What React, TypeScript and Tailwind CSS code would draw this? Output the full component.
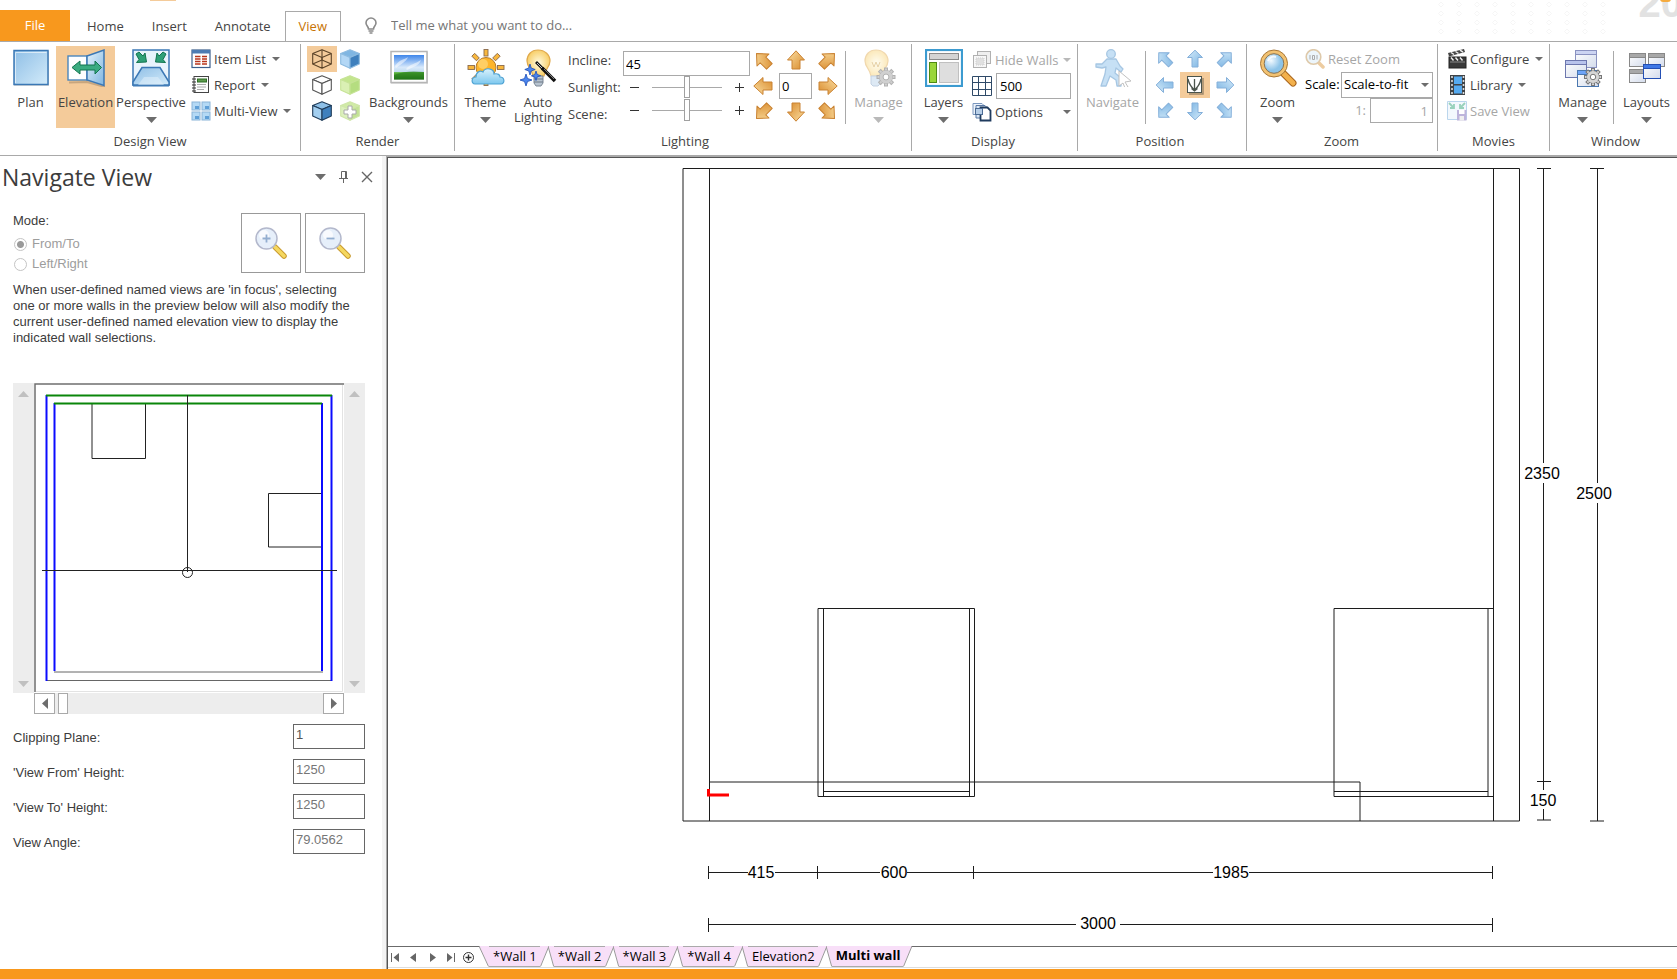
import type { ReactNode } from "react";
import clsx from "clsx";

function Defs() {
  return (
    <svg className="absolute h-0 w-0" aria-hidden="true">
      <defs>
        <linearGradient id="sky" x1="0" y1="0" x2="1" y2="1">
          <stop offset="0" stopColor="#e4f2fb" />
          <stop offset="1" stopColor="#7fb5e0" />
        </linearGradient>
        <linearGradient id="plan" x1="0" y1="0" x2="1" y2="1">
          <stop offset="0" stopColor="#8fbfe6" />
          <stop offset="1" stopColor="#d3ebfa" />
        </linearGradient>
        <linearGradient id="gold" x1="0" y1="0" x2="1" y2="1">
          <stop offset="0" stopColor="#fbe0a4" />
          <stop offset="1" stopColor="#d98a2b" />
        </linearGradient>
        <linearGradient id="blueArrow" x1="0" y1="0" x2="1" y2="1">
          <stop offset="0" stopColor="#d6ecfa" />
          <stop offset="1" stopColor="#78b2e2" />
        </linearGradient>
        <linearGradient id="photo" x1="0" y1="0" x2="0" y2="1">
          <stop offset="0" stopColor="#3f86ea" />
          <stop offset="0.5" stopColor="#d8e9fb" />
          <stop offset="0.68" stopColor="#c3dcf0" />
          <stop offset="0.72" stopColor="#5bb53c" />
          <stop offset="1" stopColor="#1d6a16" />
        </linearGradient>
        <radialGradient id="bulb">
          <stop offset="0" stopColor="#fffbe0" />
          <stop offset="1" stopColor="#f8cf6a" />
        </radialGradient>
        <radialGradient id="lens" cx="0.35" cy="0.35">
          <stop offset="0" stopColor="#f3faff" />
          <stop offset="1" stopColor="#8cc3e8" />
        </radialGradient>
        <linearGradient id="cloud" x1="0" y1="0" x2="0" y2="1">
          <stop offset="0" stopColor="#d9f2fc" />
          <stop offset="1" stopColor="#7cc7ee" />
        </linearGradient>
        <linearGradient id="win" x1="0" y1="0" x2="1" y2="1">
          <stop offset="0" stopColor="#ffffff" />
          <stop offset="1" stopColor="#d4dcec" />
        </linearGradient>
      </defs>
    </svg>
  );
}

function Caret({ big, muted }: { big?: boolean; muted?: boolean }) {
  const fill = muted ? "#b9b9b9" : "#6d6d6d";
  return big ? (
    <svg width="11" height="6" viewBox="0 0 11 6" className="shrink-0">
      <path d="M0 0h11L5.5 6z" fill={fill} />
    </svg>
  ) : (
    <svg width="8" height="4" viewBox="0 0 8 4" className="shrink-0">
      <path d="M0 0h8L4 4z" fill={fill} />
    </svg>
  );
}

/* ---------- large icons, 38 x 38 ---------- */

function Big({ children, faded }: { children: ReactNode; faded?: boolean }) {
  return (
    <svg width="38" height="38" viewBox="0 0 38 38" className={clsx("shrink-0", faded && "opacity-45")}>
      {children}
    </svg>
  );
}

const PlanIcon = () => (
  <Big>
    <rect x="2" y="2" width="35" height="35" fill="#000" opacity="0.15" />
    <rect x="2" y="1.5" width="34" height="34" fill="url(#plan)" stroke="#3b78b5" strokeWidth="1.5" />
    <path d="M3.5 34V3.5h31" fill="none" stroke="#fff" opacity="0.6" />
  </Big>
);

const ElevationIcon = () => (
  <Big>
    <path d="M2 33.5l18-.5 18 5" fill="none" stroke="#000" opacity="0.18" strokeWidth="2" />
    <rect x="1" y="7" width="19" height="24" fill="#fdfeff" stroke="#4a86bd" strokeWidth="1.4" />
    <path d="M20 7L37 1v35.5L20 31z" fill="url(#sky)" stroke="#3b78b5" strokeWidth="1.5" />
    <path d="M5 18.5l8-6.5v4h15v-4l6.5 6.5L28 25v-4H13v4z" fill="#3aab80" stroke="#12744f" />
  </Big>
);

const PerspectiveIcon = () => (
  <Big>
    <rect x="1" y="1" width="36" height="35" fill="#e8f3fc" stroke="#3b78b5" strokeWidth="1.5" />
    <path d="M1 36V33l9-14.5h18L37 33v3z" fill="url(#plan)" stroke="#3b78b5" strokeWidth="1.5" />
    <path d="M6 36l6-8h14l6 8" fill="#e4f2fb" opacity="0.5" />
    <path d="M1 37h36" stroke="#3b78b5" />
    <path d="M4 5l3-2 4 4 2-3 1.5 9-10 .5 2.5-3z" fill="#2fa077" stroke="#12744f" />
    <path d="M34 5l-3-2-4 4-2-3-1.5 9 10 .5-2.5-3z" fill="#2fa077" stroke="#12744f" />
  </Big>
);

const BackgroundsIcon = () => (
  <Big>
    <rect x="1" y="3" width="37" height="32" fill="#000" opacity="0.12" />
    <rect x="1" y="2.5" width="36" height="31" fill="#fff" stroke="#b5b5b5" strokeWidth="1.5" />
    <rect x="4" y="6" width="30" height="24.5" fill="url(#photo)" />
    <path d="M5 17c5-7 9-6 13-9-2 5-6 6-12 11z" fill="#fff" opacity="0.55" />
    <path d="M16 20c4-5 9-5 15-9-2 6-8 7-14 10z" fill="#fff" opacity="0.5" />
    <path d="M4 26c9-4 20-4 30-3v7.5H4z" fill="#23791b" opacity="0.6" />
  </Big>
);

const ThemeIcon = () => (
  <Big>
    <g fill="#f8b73d" stroke="#8a6a4c" strokeWidth="0.9">
      {[0, 45, 90, 135, 180, 225, 270, 315].map((a) => (
        <rect key={a} x="17" y="0.5" width="4" height="6.5" transform={`rotate(${a} 19 18.5)`} />
      ))}
    </g>
    <circle cx="19" cy="18.5" r="10" fill="#fdb52c" stroke="#b57a28" />
    <circle cx="16" cy="15" r="5" fill="#ffe08a" opacity="0.6" />
    <path
      d="M8 35c-4 0-4-7 1-7 0-5 4-7 7-5 2-5 11-4 11 2 4-1 6 1 6 3 5 0 5 7 1 7z"
      fill="url(#cloud)"
      stroke="#4fa3d4"
      strokeWidth="1.2"
    />
  </Big>
);

const AutoLightingIcon = () => (
  <Big>
    <path
      d="M19 1c7 0 12 5 12 11 0 6-5 8-6 15H14c-1-7-6-9-6-15C8 6 12 1 19 1z"
      fill="url(#bulb)"
      stroke="#e0a94c"
      strokeWidth="1.2"
    />
    <path d="M15 27h9v7l-2 3h-5l-2-3z" fill="#b8c4d0" stroke="#7c8896" />
    <path d="M15 30h9M15 33h9" stroke="#6c7886" />
    <path d="M17 13l7 7" stroke="#111" strokeWidth="2.8" />
    <path d="M18 14l5 5" stroke="#ddd" strokeWidth="0.9" />
    <path d="M23 19l13 13" stroke="#111" strokeWidth="3.6" />
    <path d="M25 20l10 10" stroke="#8a8a8a" strokeWidth="0.9" />
    <g fill="#4b86ee" stroke="#1e4fb8" strokeWidth="0.8">
      <path d="M11 15l1.2 4 4 1.5-4 1.5L11 26l-1.2-4-4-1.5 4-1.5z" />
      <path d="M17 22l1.2 3.5 3.5 1.2-3.500 1.2L17 31.5l-1.2-3.5-3.5-1.2 3.5-1.2z" />
      <path d="M7 25l1.5 4.5L13 31l-4.5 1.5L7 37l-1.5-4.5L1 31l4.5-1.5z" />
    </g>
  </Big>
);

function Gear({ cx, cy, r, fill, stroke }: { cx: number; cy: number; r: number; fill: string; stroke: string }) {
  return (
    <g fill={fill} stroke={stroke} strokeWidth="1">
      {[0, 45, 90, 135, 180, 225, 270, 315].map((a) => (
        <rect key={a} x={cx - 1.5} y={cy - r - 2.5} width="3" height="5" transform={`rotate(${a} ${cx} ${cy})`} />
      ))}
      <circle cx={cx} cy={cy} r={r} />
      <circle cx={cx} cy={cy} r={r} stroke="none" />
      <circle cx={cx} cy={cy} r={r / 2.2} fill="#fff" />
    </g>
  );
}

const BulbManageIcon = () => (
  <Big faded>
    <path
      d="M16 1c7 0 12 5 12 11 0 6-5 8-6 15H11c-1-7-6-9-6-15C5 6 9 1 16 1z"
      fill="url(#bulb)"
      stroke="#e0a94c"
      strokeWidth="1.2"
    />
    <path d="M12 13l2 5 2-5 2 5 2-5" fill="none" stroke="#c99a3c" />
    <path d="M11 27h9v8l-2 2h-5l-2-2z" fill="#b5cfe8" stroke="#7c9cc0" />
    <Gear cx={26} cy={28} r={6.5} fill="#999" stroke="#555" />
  </Big>
);

const LayersIcon = () => (
  <Big>
    <rect x="1" y="1" width="36" height="36" fill="#fff" stroke="#3c9bd0" strokeWidth="2.2" />
    <rect x="4.5" y="4.5" width="29" height="6" fill="#d4d4d4" stroke="#8b8b8b" />
    <rect x="4.5" y="13.5" width="7" height="20" fill="#9ad63a" stroke="#4f8a12" />
    <rect x="14.5" y="13.5" width="19" height="20" fill="#dedede" stroke="#c0c0c0" />
  </Big>
);

const NavigateIcon = () => (
  <Big faded>
    <g fill="#83bce9" stroke="#3b83c2" strokeWidth="1.3" strokeLinejoin="round">
      <circle cx="17" cy="5" r="4.3" />
      <path d="M13 10h9l4 7 3 3-2 3-5-4-1 5 6 5v8h-4l-1-6-6-4-4 10H7l4-12 1-7-4 1-6-1v-3h6z" />
    </g>
    <path d="M25 22l12 10-6 1 3 5-3 1-2-5-4 3z" fill="#fff" stroke="#777" />
  </Big>
);

const ZoomIcon = () => (
  <Big>
    <path d="M23 23l11 11" stroke="#a8641c" strokeWidth="7" strokeLinecap="round" />
    <path d="M24 24l10 10" stroke="#f3b14c" strokeWidth="5" strokeLinecap="round" />
    <circle cx="15" cy="14.5" r="13.5" fill="#f2c272" stroke="#a97836" />
    <circle cx="15" cy="14.5" r="9.8" fill="url(#lens)" stroke="#8a7350" />
    <path d="M9 12c1-4 5-5 8-4" fill="none" stroke="#fff" strokeWidth="2" opacity="0.8" />
  </Big>
);

function Win({ x, y, w, h, bar, edge }: { x: number; y: number; w: number; h: number; bar: string; edge: string }) {
  return (
    <g>
      <rect x={x} y={y} width={w} height={h} fill="url(#win)" stroke={edge} />
      <rect x={x} y={y} width={w} height="4" fill={bar} stroke={edge} />
    </g>
  );
}

const WindowManageIcon = () => (
  <Big>
    <Win x={11.5} y={1.5} w={21} h={17} bar="#ccd4f2" edge="#8a92c0" />
    <Win x={1.5} y={11.5} w={21} h={17} bar="#b8c3ec" edge="#6d77ae" />
    <Win x={13.5} y={21.5} w={21} h={16} bar="#6ea4f8" edge="#4a78b0" />
    <Gear cx={29} cy={28} r={6} fill="#d6d6d6" stroke="#777" />
  </Big>
);

const LayoutsIcon = () => (
  <Big>
    <Win x={1.5} y={4.5} w={16} h={13} bar="#a8a8a8" edge="#888" />
    <Win x={20.5} y={4.5} w={16} h={13} bar="#a8a8a8" edge="#888" />
    <Win x={1.5} y={20.5} w={16} h={13} bar="#a8a8a8" edge="#888" />
    <Win x={15.5} y={15.5} w={17} h={14} bar="#3f78e6" edge="#2450b4" />
  </Big>
);

/* ---------- small icons, 20 x 20 ---------- */

function Small({ children, faded }: { children: ReactNode; faded?: boolean }) {
  return (
    <svg width="20" height="20" viewBox="0 0 20 20" className={clsx("shrink-0", faded && "opacity-45")}>
      {children}
    </svg>
  );
}

const ItemListIcon = () => (
  <Small>
    <rect x="1" y="1" width="18" height="17.5" fill="#fff" stroke="#3c5f8c" strokeWidth="1.2" />
    <rect x="1" y="1" width="18" height="3.5" fill="#4d7cb3" />
    <path d="M4 7.5h5.5M4 10h5.5M4 12.5h5.5M4 15h5.5M11 7.5h5M11 10h5M11 12.5h5M11 15h5" stroke="#b8361c" strokeWidth="1.3" />
  </Small>
);

const ReportIcon = () => (
  <Small>
    <rect x="3" y="1.5" width="14.5" height="16" fill="#fdfdfd" stroke="#444" />
    <rect x="6.5" y="4" width="9" height="3" fill="#5d9b4c" stroke="#2d6b25" />
    <path d="M6 9.5h9M6 12h9M6 14.5h7" stroke="#aaa" />
    <path d="M1 4h4M1 7h4M1 10h4M1 13h4M1 16h4" stroke="#333" strokeWidth="1.2" />
  </Small>
);

const MultiViewIcon = () => (
  <Small>
    {[
      [1, 1],
      [11, 1],
      [1, 11],
      [11, 11],
    ].map(([x, y]) => (
      <g key={`${x}-${y}`}>
        <rect x={x} y={y} width="8" height="8" fill="#b4d9f5" stroke="#8ab4d8" />
        <path d={`M${x + 3} ${y + 4}h4v3h-4z`} fill="#4a90cf" opacity="0.8" />
      </g>
    ))}
  </Small>
);

function Cube({ top, left, right, edge, plus }: { top: string; left: string; right: string; edge: string; plus?: boolean }) {
  return (
    <Small>
      <g stroke={edge} strokeWidth="1.1" strokeLinejoin="round">
        <path d="M10 .7l9.3 3.8L10 8.5.7 4.5z" fill={top} />
        <path d="M.7 4.5L10 8.5v10.8L.7 15z" fill={left} />
        <path d="M19.3 4.5L10 8.5v10.8l9.3-4.3z" fill={right} />
      </g>
      {plus && <path d="M8 5h4v4h4v4h-4v4H8v-4H4V9h4z" fill="#fff" stroke="#aaa" />}
    </Small>
  );
}

const WireCube = () => (
  <Small>
    <g fill="none" stroke="#5b4328" strokeWidth="1.1" strokeLinejoin="round">
      <path d="M10 .7l9.3 3.8L10 8.5.7 4.5zM.7 4.5V15l9.3 4.3 9.3-4.3V4.5M10 8.5v10.8" />
      <path d="M10 .7V11M.7 15L10 11l9.3 4" />
    </g>
  </Small>
);

const HideWallsIcon = () => (
  <Small faded>
    <rect x="5.5" y="1.5" width="13" height="12" fill="#ddd" stroke="#555" />
    <rect x="1.5" y="5.5" width="13" height="12" fill="#eee" stroke="#555" />
    <path d="M4 8h8v7H4z" fill="#bbb" stroke="#999" strokeDasharray="1 1" />
  </Small>
);

const GridIcon = () => (
  <Small>
    <path d="M.5.5h19v19H.5zM6.5.5v19M13.5.5v19M.5 6.5h19M.5 13.5h19" fill="#fff" stroke="#2f4a68" />
  </Small>
);

const OptionsIcon = () => (
  <Small>
    <path d="M1 1.5h9l2 2v9H1z" fill="#eef3fa" stroke="#7a97be" />
    <path d="M4 3.5h9l3 3V16H4z" fill="#dbe7f5" stroke="#5a7aa6" />
    <path d="M8.5 5.5h7l3 3v10h-10z" fill="#fff" stroke="#1f3b5e" strokeWidth="1.8" />
    <rect x="3.5" y="6.5" width="7" height="6" fill="#b8cfe8" stroke="#4a6a94" />
  </Small>
);

const ResetZoomIcon = () => (
  <Small faded>
    <path d="M13 13l5 5" stroke="#d9902f" strokeWidth="3.5" strokeLinecap="round" />
    <circle cx="8.5" cy="8" r="7.3" fill="#d6ebf8" stroke="#b88a45" strokeWidth="1.6" />
    <path d="M5 6v4.5M12 6v4.5M7.5 6.5h2v4h-2z" fill="none" stroke="#444" />
  </Small>
);

const ClapperIcon = () => (
  <Small>
    <rect x="2" y="8" width="17" height="11" fill="#3a3a3a" stroke="#222" />
    <path d="M1 4l16-4 1 3L2 7.5z" fill="#444" />
    <path d="M4 3.5l3 2M8.5 2.5l3 2M13 1.2l3 2" stroke="#eee" strokeWidth="1.5" />
    <path d="M4 8.5l2.5 3M8.5 8.5l2.5 3M13 8.5l2.5 3" stroke="#eee" strokeWidth="1.4" />
    <path d="M3 13h15" stroke="#888" />
  </Small>
);

const FilmIcon = () => (
  <Small>
    <rect x="3" y="0" width="15" height="20" fill="#3f4347" />
    <rect x="7" y="1.5" width="8" height="7.5" fill="#55aaf0" />
    <rect x="7" y="10.5" width="8" height="8" fill="#55aaf0" />
    <path d="M5 1v18M16.5 1v18" stroke="#ddd" strokeWidth="1.6" strokeDasharray="2 2" />
  </Small>
);

const SaveViewIcon = () => (
  <Small faded>
    <path d="M.5.5h19v18H.5z" fill="#e5f1fb" stroke="#6ba6d8" />
    <path d="M2 2l5 5M7 3v4H3M18 2l-5 5M13 3v4h4" fill="none" stroke="#1f9c6c" strokeWidth="1.8" />
    <rect x="10" y="9" width="9.5" height="10.5" fill="#6f5bb0" />
    <rect x="12" y="9" width="5.5" height="4" fill="#fff" />
    <rect x="12.5" y="15" width="4.5" height="4.5" fill="#ddd" />
  </Small>
);

const CenterIcon = () => (
  <Small>
    <path d="M18 3v16H4" fill="none" stroke="#a08a6c" strokeWidth="1.5" />
    <rect x="2.5" y="1.5" width="14" height="16" fill="#fff" stroke="#4b544c" />
    <path d="M3 4c1 5 3 8 6.5 11C13 12 15 9 16 4M9.5 4v12M6.500 13.500l3 2.500 3-2.500" fill="none" stroke="#4b544c" strokeWidth="1.3" />
  </Small>
);

function ArrowIcon({ angle, gold }: { angle: number; gold?: boolean }) {
  return (
    <svg width="20" height="20" viewBox="0 0 20 20" aria-hidden="true" className="shrink-0">
      <path
        d={gold ? "M10 .8L18.5 10H14v9H6v-9H1.5z" : "M10 1.2L17.5 8.5H13V18H7V8.5H2.5z"}
        transform={`rotate(${angle} 10 10)`}
        fill={gold ? "url(#gold)" : "url(#blueArrow)"}
        stroke={gold ? "#c98232" : "#85b0da"}
        strokeWidth="1"
        strokeLinejoin="round"
      />
    </svg>
  );
}

/* ---------- ribbon parts ---------- */

function Group({ label, className, last, children }: { label: string; className?: string; last?: boolean; children: ReactNode }) {
  return (
    <section
      aria-label={label}
      className={clsx("flex shrink-0 flex-col", !last && "border-r border-[#a9a9a9]", className)}
    >
      <div className="flex flex-1 items-start pt-0.5">{children}</div>
      <div className="h-5 text-center leading-5">{label}</div>
    </section>
  );
}

function BigButton({
  icon,
  label,
  width,
  caret,
  active,
  disabled,
}: {
  icon: ReactNode;
  label: ReactNode;
  width: string;
  caret?: boolean;
  active?: boolean;
  disabled?: boolean;
}) {
  return (
    <button
      type="button"
      disabled={disabled}
      className={clsx(
        "flex h-[82px] shrink-0 flex-col items-center pt-[3px]",
        width,
        active && "bg-[#f4cb9a]",
        disabled && "text-[#a6a6a6]"
      )}
    >
      {icon}
      <span className="mt-2 whitespace-nowrap leading-[15px]">{label}</span>
      {caret && (
        <span className="mt-[7px]">
          <Caret big muted={disabled} />
        </span>
      )}
    </button>
  );
}

function SmallButton({ icon, label, caret, disabled, spread }: { icon: ReactNode; label: string; caret?: boolean; disabled?: boolean; spread?: boolean }) {
  return (
    <button
      type="button"
      disabled={disabled}
      className={clsx("flex h-[26px] items-center whitespace-nowrap", spread && "w-full", disabled && "text-[#a6a6a6]")}
    >
      {icon}
      <span className="ml-[3px] pt-px">{label}</span>
      {caret && (
        <span className={spread ? "ml-auto" : "ml-[6px]"}>
          <Caret muted={disabled} />
        </span>
      )}
    </button>
  );
}

function IconButton({ label, active, children }: { label: string; active?: boolean; children: ReactNode }) {
  return (
    <button
      type="button"
      aria-label={label}
      className={clsx("flex h-[26px] items-center justify-center", active && "bg-[#f4cb9a]")}
    >
      {children}
    </button>
  );
}

const Divider = () => <div className="mt-[5px] h-[73px] w-px bg-[#a9a9a9]" />;

function LightSlider({ label }: { label: string }) {
  return (
    <div className="flex h-[23px] items-center pl-[7px] text-[#333]">
      <svg width="9" height="9" className="shrink-0">
        <path d="M0 4.5h9" stroke="currentColor" />
      </svg>
      <input
        type="range"
        aria-label={label}
        defaultValue={50}
        className="mx-[13px] h-[22px] w-[70px] appearance-none bg-transparent [&::-webkit-slider-runnable-track]:h-px [&::-webkit-slider-runnable-track]:bg-[#a9a9a9] [&::-webkit-slider-thumb]:-mt-[11px] [&::-webkit-slider-thumb]:h-[22px] [&::-webkit-slider-thumb]:w-[6px] [&::-webkit-slider-thumb]:appearance-none [&::-webkit-slider-thumb]:border [&::-webkit-slider-thumb]:border-[#a0a0a0] [&::-webkit-slider-thumb]:bg-white"
      />
      <svg width="9" height="9" className="shrink-0">
        <path d="M0 4.5h9M4.5 0v9" stroke="currentColor" />
      </svg>
    </div>
  );
}

function TabBar() {
  return (
    <nav className="relative flex h-[42px] shrink-0 items-end overflow-hidden border-b border-[#a9a9a9]">
      <div className="absolute left-[150px] top-0 h-px w-[26px] bg-[#f4cb9a]" />
      <svg className="absolute right-0 top-0 h-[40px] w-[240px]" aria-hidden="true">
        <defs>
          <pattern id="dots" width="18" height="9" patternUnits="userSpaceOnUse">
            <path d="M4 2l2.5 2.5L4 7 1.5 4.5z" fill="none" stroke="#f6f6f6" />
          </pattern>
        </defs>
        <rect width="170" height="34" fill="url(#dots)" />
      </svg>
      <div className="absolute -right-1.5 -top-5 font-['Liberation_Sans'] text-[40px] font-bold leading-[46px] text-[#e2e2e2]">20</div>
      <div className="absolute -top-1 right-1.5 h-[6px] w-[11px] rounded-full bg-[#f5ab3f]" />
      <button type="button" className="h-[31px] w-[70px] bg-[#f8981d] text-white">File</button>
      <div className="relative z-10 -mb-px flex h-[31px] items-stretch pl-[3px]">
        <button type="button" className="px-[14px]">Home</button>
        <button type="button" className="px-[14px]">Insert</button>
        <button type="button" className="px-[14px]">Annotate</button>
        <button type="button" className="border border-b-0 border-[#a9a9a9] bg-white px-[13px] text-[#c77405]">View</button>
      </div>
      <label className="ml-6 flex h-[31px] items-center">
        <svg width="12" height="17" viewBox="0 0 12 17" fill="none" stroke="#8a8a8a" strokeWidth="1.6">
          <path d="M6 1a5 5 0 0 1 5 5c0 2.5-2.5 3.5-2.5 6h-5C3.5 9.5 1 8.5 1 6a5 5 0 0 1 5-5z" />
          <path d="M3.5 14h5M4.5 16h3" />
        </svg>
        <input
          aria-label="Tell me what you want to do"
          placeholder="Tell me what you want to do..."
          className="ml-[14px] w-[220px] bg-transparent outline-none placeholder:text-[#767676]"
        />
      </label>
    </nav>
  );
}

const box = "border border-[#a9a9a9] bg-white text-black outline-none";

function Ribbon() {
  return (
    <div className="flex h-[114px] shrink-0 overflow-hidden border-b border-[#a9a9a9] pb-1 pt-0.5">
      <Group label="Design View">
        <div className="flex pl-[5px]">
          <BigButton icon={<PlanIcon />} label="Plan" width="w-[51px]" />
          <BigButton icon={<ElevationIcon />} label="Elevation" width="w-[59px]" active />
          <BigButton icon={<PerspectiveIcon />} label="Perspective" width="w-[72px]" caret />
          <div className="w-[113px] pl-1">
            <SmallButton icon={<ItemListIcon />} label="Item List" caret />
            <SmallButton icon={<ReportIcon />} label="Report" caret />
            <SmallButton icon={<MultiViewIcon />} label="Multi-View" caret />
          </div>
        </div>
      </Group>

      <Group label="Render">
        <div className="grid grid-cols-[30px_26px] pl-[6px]">
          <IconButton label="Wireframe" active><WireCube /></IconButton>
          <IconButton label="Solid"><Cube top="#7fb6e2" left="#b3d7f5" right="#3f80bd" edge="#8dbbe0" /></IconButton>
          <IconButton label="Hidden line"><Cube top="#fff" left="#fff" right="#fff" edge="#555" /></IconButton>
          <IconButton label="Textured"><Cube top="#c3e58e" left="#daf0b4" right="#b5dd80" edge="#c6e396" /></IconButton>
          <IconButton label="Solid with edges"><Cube top="#8dc0e8" left="#a3cff0" right="#3f80bd" edge="#1f3b58" /></IconButton>
          <IconButton label="Add render"><Cube top="#d0eaa6" left="#dcf0bd" right="#c2e295" edge="#cfe6a8" plus /></IconButton>
        </div>
        <BigButton icon={<BackgroundsIcon />} label="Backgrounds" width="w-[91px]" caret />
      </Group>

      <Group label="Lighting" className="pl-1">
        <BigButton icon={<ThemeIcon />} label="Theme" width="w-[53px]" caret />
        <BigButton icon={<AutoLightingIcon />} label={<>Auto<br />Lighting</>} width="w-[52px]" />
        <div className="w-[59px] pl-1 pt-px leading-[27px]">
          <label htmlFor="incline" className="block">Incline:</label>
          <div>Sunlight:</div>
          <div>Scene:</div>
        </div>
        <div className="w-[127px] pt-[5px]">
          <input id="incline" defaultValue="45" className={clsx(box, "block h-[25px] w-full px-[2px]")} />
          <LightSlider label="Sunlight" />
          <LightSlider label="Scene" />
        </div>
        <div className="ml-[3px] mt-px grid grid-cols-[20px_33px_20px] gap-x-[6px]">
          <IconButton label="Light north west"><ArrowIcon gold angle={-45} /></IconButton>
          <IconButton label="Light north"><ArrowIcon gold angle={0} /></IconButton>
          <IconButton label="Light north east"><ArrowIcon gold angle={45} /></IconButton>
          <IconButton label="Light west"><ArrowIcon gold angle={-90} /></IconButton>
          <input aria-label="Light angle" defaultValue="0" className={clsx(box, "h-[26px] w-full px-[2px]")} />
          <IconButton label="Light east"><ArrowIcon gold angle={90} /></IconButton>
          <IconButton label="Light south west"><ArrowIcon gold angle={-135} /></IconButton>
          <IconButton label="Light south"><ArrowIcon gold angle={180} /></IconButton>
          <IconButton label="Light south east"><ArrowIcon gold angle={135} /></IconButton>
        </div>
        <div className="ml-[7px]"><Divider /></div>
        <BigButton icon={<BulbManageIcon />} label="Manage" width="w-[65px]" caret disabled />
      </Group>

      <Group label="Display" className="pl-[3px] pr-[6px]">
        <BigButton icon={<LayersIcon />} label="Layers" width="w-[57px]" caret />
        <div className="w-[99px] pt-px">
          <SmallButton icon={<HideWallsIcon />} label="Hide Walls" caret disabled spread />
          <label className="flex items-center gap-1">
            <GridIcon />
            <input aria-label="Grid size" defaultValue="500" className={clsx(box, "h-[26px] w-full min-w-0 px-[3px]")} />
          </label>
          <SmallButton icon={<OptionsIcon />} label="Options" caret spread />
        </div>
      </Group>

      <Group label="Position" className="pl-[2px] pr-[6px]">
        <BigButton icon={<NavigateIcon />} label="Navigate" width="w-[65px]" disabled />
        <Divider />
        <div className="grid grid-cols-[31px_30px_30px] pl-[3px]">
          <IconButton label="Move north west"><ArrowIcon angle={-45} /></IconButton>
          <IconButton label="Move north"><ArrowIcon angle={0} /></IconButton>
          <IconButton label="Move north east"><ArrowIcon angle={45} /></IconButton>
          <IconButton label="Move west"><ArrowIcon angle={-90} /></IconButton>
          <IconButton label="Center" active><CenterIcon /></IconButton>
          <IconButton label="Move east"><ArrowIcon angle={90} /></IconButton>
          <IconButton label="Move south west"><ArrowIcon angle={-135} /></IconButton>
          <IconButton label="Move south"><ArrowIcon angle={180} /></IconButton>
          <IconButton label="Move south east"><ArrowIcon angle={135} /></IconButton>
        </div>
      </Group>

      <Group label="Zoom" className="pl-[3px] pr-1">
        <BigButton icon={<ZoomIcon />} label="Zoom" width="w-[55px]" caret />
        <div className="w-[128px]">
          <SmallButton icon={<ResetZoomIcon />} label="Reset Zoom" disabled />
          <div className="flex items-center text-black">
            <label htmlFor="scale" className="w-9">Scale:</label>
            <div className="relative flex-1">
              <select id="scale" className={clsx(box, "block h-[26px] w-full appearance-none pl-[2px]")}>
                <option>Scale-to-fit</option>
              </select>
              <span className="pointer-events-none absolute right-1 top-[11px]"><Caret /></span>
            </div>
          </div>
          <div className="flex items-center justify-end text-[#a6a6a6]">
            <label htmlFor="ratio" className="mr-1">1:</label>
            <input id="ratio" disabled defaultValue="1" className="h-[25px] w-[63px] border border-[#a9a9a9] bg-white px-1 text-right" />
          </div>
        </div>
      </Group>

      <Group label="Movies">
        <div className="w-[111px] pl-[9px]">
          <SmallButton icon={<ClapperIcon />} label="Configure" caret />
          <SmallButton icon={<FilmIcon />} label="Library" caret />
          <SmallButton icon={<SaveViewIcon />} label="Save View" disabled />
        </div>
      </Group>

      <Group label="Window" className="pl-[2px]" last>
        <BigButton icon={<WindowManageIcon />} label="Manage" width="w-[61px]" caret />
        <Divider />
        <BigButton icon={<LayoutsIcon />} label="Layouts" width="w-[65px]" caret />
      </Group>
    </div>
  );
}

/* ---------- navigate pane ---------- */

function Magnifier({ sign }: { sign: string }) {
  return (
    <svg width="32" height="32" viewBox="0 0 32 32" aria-hidden="true">
      <path d="M20 20l9 9" stroke="#c99a2e" strokeWidth="5.5" strokeLinecap="round" />
      <path d="M20 20l9 9" stroke="#f5d860" strokeWidth="3.5" strokeLinecap="round" />
      <circle cx="11.5" cy="11.5" r="10.5" fill="#e6effa" stroke="#b3b8cc" strokeWidth="1.5" />
      <circle cx="9" cy="8" r="5" fill="#fff" opacity="0.7" />
      <path d={sign} stroke="#93aed0" strokeWidth="1.8" />
    </svg>
  );
}

function SideScroll() {
  return (
    <div className="flex w-[21px] flex-col items-center justify-between bg-[#ededed] pb-[6px] pt-2">
      <svg width="11" height="6"><path d="M0 6h11L5.5 0z" fill="#c0c0c0" /></svg>
      <svg width="11" height="6"><path d="M0 0h11L5.5 6z" fill="#c0c0c0" /></svg>
    </div>
  );
}

function PlanPreview() {
  return (
    <svg width="310" height="310" viewBox="34 383 310 310" className="bg-white">
      <path d="M35 692V384h309" fill="none" stroke="#6f6f6f" strokeWidth="1.5" />
      <path d="M36 691.5h306.5V385" fill="none" stroke="#e3e3e3" />
      <path d="M46.5 680.5h285M54 672h269" stroke="#666" />
      <path d="M92 404v54.5h53.5V404" fill="none" stroke="#222" />
      <path d="M322 493.5h-53.5V547H322" fill="none" stroke="#222" />
      <g fill="none" strokeWidth="2">
        <path d="M46.5 681V395M331.5 681V395M54.5 671V403M322 671V403" stroke="#0b0bff" />
        <path d="M46 395.5h286M54 403.5h268" stroke="#0a860a" />
      </g>
      <path d="M187.5 395v177M42 570.5h295" stroke="#222" />
      <circle cx="187.5" cy="572.5" r="5" fill="none" stroke="#222" />
    </svg>
  );
}

const fields = [
  { id: "clip", label: "Clipping Plane:", value: "1", strong: true },
  { id: "from", label: "'View From' Height:", value: "1250" },
  { id: "to", label: "'View To' Height:", value: "1250" },
  { id: "angle", label: "View Angle:", value: "79.0562" },
];

function NavigatePane() {
  return (
    <aside className="w-[386px] shrink-0 border-r-4 border-[#f3f3f3]">
      <header className="flex h-[42px] items-center pl-[2px] pr-[9px]">
        <h1 className="text-[23px] text-[#3c3c3c]">Navigate View</h1>
        <div className="ml-auto flex items-center gap-[13px] text-[#666]">
          <button type="button" aria-label="Pane menu"><Caret big /></button>
          <button type="button" aria-label="Pin pane">
            <svg width="9" height="12" fill="none" stroke="currentColor">
              <path d="M2.5 7V.5h5V7M6.5 1v6M0 7.5h9M4.5 8v4" />
            </svg>
          </button>
          <button type="button" aria-label="Close pane">
            <svg width="12" height="12" stroke="currentColor" strokeWidth="1.4">
              <path d="M1 1l10 10M11 1L1 11" />
            </svg>
          </button>
        </div>
      </header>

      <div className="mt-[15px] pl-[13px] pr-[17px] font-['Liberation_Sans',Arial,sans-serif] text-[13px] leading-4 text-[#3c3c3c]">
        <div className="flex">
          <fieldset className="flex-1 pt-px" disabled>
            <legend className="mb-1">Mode:</legend>
            {["From/To", "Left/Right"].map((mode, i) => (
              <label key={mode} className="flex h-5 items-center gap-[5px] pl-px text-[#9d9d9d]">
                <input
                  type="radio"
                  name="mode"
                  defaultChecked={i === 0}
                  className="h-[13px] w-[13px] appearance-none rounded-full border border-[#c4c4c4] bg-white checked:bg-[radial-gradient(#9a9a9a_3px,#fff_4px)]"
                />
                {mode}
              </label>
            ))}
          </fieldset>
          <div className="flex gap-1">
            <button type="button" aria-label="Zoom in" className="flex h-[60px] w-[60px] items-center justify-center border border-[#999]">
              <Magnifier sign="M11.5 7.5v8M7.5 11.5h8" />
            </button>
            <button type="button" aria-label="Zoom out" className="flex h-[60px] w-[60px] items-center justify-center border border-[#999]">
              <Magnifier sign="M7.5 11.5h8" />
            </button>
          </div>
        </div>

        <p className="mt-2">
          When user-defined named views are 'in focus', selecting
          <br />
          one or more walls in the preview below will also modify the
          <br />
          current user-defined named elevation view to display the
          <br />
          indicated wall selections.
        </p>

        <div className="mt-[37px] flex">
          <SideScroll />
          <PlanPreview />
          <SideScroll />
        </div>
        <div className="mx-[21px] flex h-[21px] bg-[#ededed]">
          <button type="button" aria-label="Scroll left" className="flex w-[21px] items-center justify-center border border-[#a9a9a9] bg-white">
            <svg width="6" height="11"><path d="M6 0v11L0 5.5z" fill="#6d6d6d" /></svg>
          </button>
          <div className="ml-[3px] w-[10px] border border-[#a9a9a9] bg-white" />
          <button type="button" aria-label="Scroll right" className="ml-auto flex w-[21px] items-center justify-center border border-[#a9a9a9] bg-white">
            <svg width="6" height="11"><path d="M0 0v11l6-5.5z" fill="#6d6d6d" /></svg>
          </button>
        </div>

        <div className="mt-[10px] flex flex-col gap-[10px]">
          {fields.map((f) => (
            <div key={f.id} className="flex h-[25px] items-center justify-between">
              <label htmlFor={f.id} className="pt-0.5">{f.label}</label>
              <input
                id={f.id}
                defaultValue={f.value}
                className={clsx("h-[25px] w-[72px] border border-[#666] bg-white pb-1 pl-[2px] outline-none", f.strong ? "text-[#555]" : "text-[#767676]")}
              />
            </div>
          ))}
        </div>
      </div>
    </aside>
  );
}

/* ---------- elevation drawing ---------- */

const dims = [
  { x: 761, y: 872, text: "415" },
  { x: 894, y: 872, text: "600" },
  { x: 1231, y: 872, text: "1985" },
  { x: 1098, y: 923, text: "3000" },
  { x: 1542, y: 473, text: "2350" },
  { x: 1594, y: 493, text: "2500" },
  { x: 1543, y: 800, text: "150" },
];

function ElevationDrawing() {
  return (
    <svg viewBox="388 158 1289 788" className="h-full w-full">
      <g fill="none" stroke="#1c1c1c" strokeWidth="1">
        <path d="M683 168.5h836.5v652.5H683zM709.500 168.500v652.500M1493.500 168.500v652.500" />
        <path d="M709.5 782H1360v39" />
        <path d="M818 608.5h156.5v188H818zM823.5 608.5v188M969.5 608.5v188M823.5 791.5h146" />
        <path d="M1493.5 608.5H1334v188h159.5M1488 608.5v188M1334 791.5h154" />
        <path d="M709 872.5h39M775 872.5h105M907 872.5h306M1249 872.5h243" />
        <path d="M708.5 866v13M817.5 866v13M973.5 866v13M1492.500 866v13" />
        <path d="M709 924.5h367M1120 924.5h372M708.5 918v14M1492.5 918v14" />
        <path d="M1543.5 168v295M1543.5 483v307M1543.5 809v11M1537 168.5h14M1537 781.5h14M1537 820h14" />
        <path d="M1597.5 168v315M1597.5 503v318M1590 168.5h14M1590 821h14" />
      </g>
      <path d="M708.5 789v6H729" fill="none" stroke="#f00" strokeWidth="3" />
      <g className="fill-black font-['Liberation_Sans',Arial,sans-serif] text-[16px]" textAnchor="middle">
        {dims.map((d) => (
          <text key={d.text} x={d.x} y={d.y + 6}>{d.text}</text>
        ))}
      </g>
    </svg>
  );
}

const sheets = ["*Wall 1", "*Wall 2", "*Wall 3", "*Wall 4", "Elevation2", "Multi wall"];

function SheetTabs() {
  return (
    <div className="relative flex h-[22px] shrink-0 border-b border-t border-b-[#ddd] border-t-[#6b6b6b] text-[13px] text-black">
      <div className="flex w-[91px] shrink-0 items-center pl-[3px] text-[#666]">
        <button type="button" aria-label="First sheet"><svg width="8" height="9" fill="currentColor"><path d="M0 0h1v9H0zM8 0v9L2.5 4.5z" /></svg></button>
        <button type="button" aria-label="Previous sheet" className="ml-[11px]"><svg width="6" height="9" fill="currentColor"><path d="M6 0v9L0 4.5z" /></svg></button>
        <button type="button" aria-label="Next sheet" className="ml-[14px]"><svg width="6" height="9" fill="currentColor"><path d="M0 0v9l6-4.5z" /></svg></button>
        <button type="button" aria-label="Last sheet" className="ml-[11px]"><svg width="8" height="9" fill="currentColor"><path d="M7 0h1v9H7zM0 0v9l5.5-4.5z" /></svg></button>
        <button type="button" aria-label="Add sheet" className="ml-2">
          <svg width="11" height="11" fill="none" stroke="#333">
            <circle cx="5.5" cy="5.5" r="5" />
            <path d="M5.5 2.5v6M2.500 5.500h6" strokeWidth="1.4" />
          </svg>
        </button>
      </div>
      {sheets.map((name, i) => {
        const active = i === sheets.length - 1;
        return (
          <button key={name} type="button" className={clsx("-mt-px flex h-[21px]", i > 0 && "-ml-px", active && "font-bold")}>
            <svg width={i === 0 ? 10 : 6} height="21" viewBox="0 0 10 21" preserveAspectRatio="none" className="shrink-0">
              <path d="M0 0L10 20.5V0z" fill="#f8dff8" />
              <path d="M0 0L9.5 20.5" stroke="#999" vectorEffect="non-scaling-stroke" />
            </svg>
            <span className={clsx("flex h-[21px] items-center whitespace-nowrap border-b border-[#aaa] bg-[#f8dff8] pl-1 pr-[3px]", !active && "border-t")}>{name}</span>
            <svg width="9" height="21" viewBox="0 0 9 21" className="shrink-0">
              <path d="M0 0h9L0 20.5z" fill="#f8dff8" />
              <path d="M9 0L.5 20.5" stroke="#999" />
            </svg>
          </button>
        );
      })}
    </div>
  );
}

export default function App() {
  return (
    <div className="flex h-screen flex-col overflow-hidden bg-white font-['Open_Sans','Segoe_UI',sans-serif] text-[13px] text-[#444]">
      <Defs />
      <TabBar />
      <Ribbon />
      <div className="flex min-h-0 flex-1">
        <NavigatePane />
        <main className="flex min-w-0 flex-1 border-l border-t border-[#a9a9a9]">
          <div className="flex min-w-0 flex-1 flex-col border-l border-t border-[#555]">
            <div className="min-h-0 flex-1">
              <ElevationDrawing />
            </div>
            <SheetTabs />
            <div className="h-px" />
          </div>
        </main>
      </div>
      <footer className="h-[10px] shrink-0 bg-[#f8981d]" />
    </div>
  );
}
